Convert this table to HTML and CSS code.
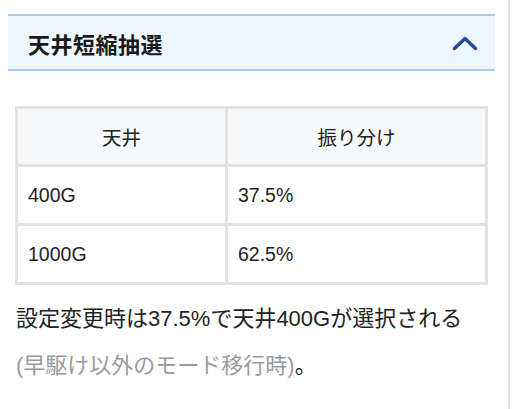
FILE: index.html
```html
<!DOCTYPE html>
<html lang="ja">
<head>
    <meta charset="UTF-8">
    <meta name="viewport" content="width=device-width, initial-scale=1.0">
    <title>天井短縮抽選</title>
    <link rel="stylesheet" href="styles.css">
</head>
<body>
    <div class="page">
        <div class="accordion-head">
            <h2>天井短縮抽選</h2>
            <svg class="chevron" width="26" height="16" viewBox="0 0 26 16">
                <path d="M2.5 13.5 L13 3.5 L23.5 13.5" fill="none" stroke="#1d4f91" stroke-width="3.4" stroke-linecap="round" stroke-linejoin="round"/>
            </svg>
        </div>

        <div class="accordion-body">
            <table class="rate-table">
                <thead>
                    <tr>
                        <th class="col-ceiling">天井</th>
                        <th>振り分け</th>
                    </tr>
                </thead>
                <tbody>
                    <tr>
                        <td>400G</td>
                        <td>37.5%</td>
                    </tr>
                    <tr>
                        <td>1000G</td>
                        <td>62.5%</td>
                    </tr>
                </tbody>
            </table>

            <p class="note">設定変更時は37.5%で天井400Gが選択される<br><span class="sub">(早駆け以外のモード移行時)</span>。</p>
        </div>
    </div>
</body>
</html>
```

FILE: styles.css
```css
* {
    margin: 0;
    padding: 0;
    box-sizing: border-box;
}

body {
    background: #fff;
    color: #222;
    font-family: "Liberation Sans", "Noto Sans CJK JP", sans-serif;
}

.page {
    width: 510px;
    min-height: 409px;
    border-right: 2px solid #e2e2e2;
    padding-top: 14px;
}

.accordion-head {
    display: flex;
    align-items: center;
    justify-content: space-between;
    margin: 0 13px 0 8px;
    height: 57px;
    padding: 0 17px 0 20px;
    background: #eef6ff;
    border-top: 2px solid #a8cdf2;
    border-bottom: 2px solid #a8cdf2;
}

.accordion-head h2 {
    font-family: "Noto Sans CJK JP", sans-serif;
    font-size: 22px;
    font-weight: 600;
    color: #1a1a1a;
    letter-spacing: 0.5px;
}

.chevron {
    display: block;
}

.accordion-body {
    padding: 35px 22px 0 15px;
}

.rate-table {
    width: 473px;
    border-collapse: collapse;
    border: 3px solid #e2e2e2;
    font-size: 19.5px;
}

.rate-table th,
.rate-table td {
    border: 3px solid #e2e2e2;
    text-align: left;
    padding: 0 10px;
}

.rate-table th {
    height: 58px;
    background: #f7f8fa;
    font-family: "Noto Sans CJK JP", sans-serif;
    font-weight: 400;
    text-align: center;
    color: #222;
}

.rate-table td {
    height: 59px;
    color: #222;
}

.col-ceiling {
    width: 210px;
}

.note {
    margin-top: 10px;
    padding-left: 1px;
    font-size: 22px;
    line-height: 47px;
    color: #222;
}

.note .sub {
    color: #9a9a9a;
}
```
